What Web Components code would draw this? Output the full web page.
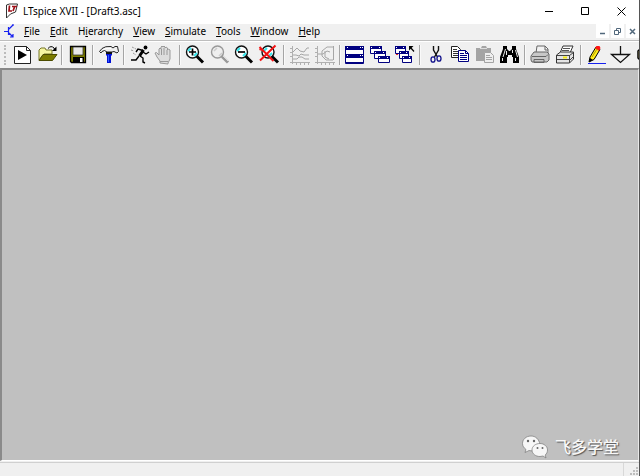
<!DOCTYPE html>
<html lang="en">
<head>
<meta charset="utf-8">
<title>LTspice XVII - [Draft3.asc]</title>
<style>
html, body { margin: 0; height: 100%; }
body { font-family: "Noto Sans", "Noto Sans CJK SC", sans-serif; font-size: 10px; color: #000; overflow: hidden; }
</style>
</head>
<body>
<app-window></app-window>
<script>
const ICONS = {
play: '<path d="M4.500 3.500h12l4 4v13h-16z" fill="#fff" stroke="#222"/><path d="M16.500 3.500v4h4" fill="none" stroke="#222"/><path d="M8 7v10l9-5z"/>',
open: '<path d="M4 17V7l2-2h4l1 2h6v4H9z" fill="#f6f6a0" stroke="#77772a"/><path d="M4 17.500l4-6h14l-4.500 6z" fill="#7b7b00" stroke="#4c4c00"/><path d="M13 5.500q3-3.500 6-.5l1 2" fill="none" stroke="#000"/><path d="M21.500 3.500v4.500h-4.500z"/>',
save: '<path d="M4.500 3.500h15v16h-14l-1-1z" fill="#7b7b00" stroke="#000" stroke-width="1.300"/><path d="M7 4h10v8H7z" fill="#e8e8e8" stroke="#222" stroke-width=".7"/><path d="M7 14h11v5H7z"/><path d="M14 15h2.500v4H14z" fill="#fff"/>',
hammer: '<path d="M2.500 8.500L5 5.500Q8 3 14 3.500l2 1.500 2-1.500h2.500l1 5-1.500 1.500-3-1.500-2 .5H10L7.500 7.500 5 8.500 4 10z" fill="#eee" stroke="#222"/><path d="M6 6.500q4-2 8-1" stroke="#fff" fill="none"/><path d="M9 9h6v3l-1 1v7h-4v-7l-1-1z" fill="#0010d8"/><path d="M9 9h6v2H9z" fill="#111"/><path d="M11.500 12v7" stroke="#315cff"/>',
run: '<circle cx="17.500" cy="4.500" r="1.900"/><path d="M15.500 7l-4 6" stroke="#000" stroke-width="3"/><path d="M15 7.500L10 6l-2 3M15 9l3 2 3-2M12 13l3 2v4l2 1M11 13l-3 4H3" fill="none" stroke="#000" stroke-width="1.400"/><path d="M4 4l4 2M3 7l3 1M5 10l3 2" stroke="#999" stroke-dasharray="2 1"/>',
hand: '<path d="M8 20v-2l-3-4-2-4 1.500-.5L7 12V6l1-1 1 1V4l1-1 1 1 1-1 1 1v1l1-1 1.500 1v2l1-1 1.500 1v9l-2 4v1z" fill="#ddd" stroke="#999"/><path d="M9.500 6v6M12 5v7M15 7v5M8 18.500h8" stroke="#999" fill="none"/>',
zoomin: '<circle cx="9.500" cy="9" r="6" fill="#fff" stroke="#111" stroke-width="1.400"/><path d="M5 8l3-3M11 13l3-3" stroke="#35e7ed" stroke-width="2"/><path d="M6 9h7M9.500 5.500v7" stroke="#000" stroke-width="1.700"/><path d="M14 13.500l6 6" stroke="#000" stroke-width="3"/>',
zoomgray: '<circle cx="9.500" cy="9" r="6" fill="#eee" stroke="#999" stroke-width="1.400"/><path d="M6 8l3-3M11 13l3-3" stroke="#ccc" stroke-width="1.500"/><path d="M14 13.500l6 6" stroke="#999" stroke-width="3"/><path d="M15 13l5 5" stroke="#ddd"/>',
zoomout: '<circle cx="9.500" cy="9" r="6" fill="#fff" stroke="#111" stroke-width="1.400"/><path d="M5 8l3-3M11 13l3-3" stroke="#35e7ed" stroke-width="2"/><path d="M6 9h7" stroke="#000" stroke-width="1.700"/><path d="M14 13.500l6 6" stroke="#000" stroke-width="3"/>',
zoomfit: '<circle cx="11" cy="9" r="6" fill="#fff" stroke="#111" stroke-width="1.400"/><path d="M7 8l3-3M12 13l3-3" stroke="#35e7ed" stroke-width="2"/><path d="M15 13.500l6 6" stroke="#000" stroke-width="3"/><path d="M2.500 4l14 14M18.500 2.500L3 17.500M2.500 6l3 1" stroke="#f11313" stroke-width="2"/>',
plot: '<path d="M4.500 3v18M2 19.500h20M2 5.500h2M2 9.500h2M2 13.500h2M8.500 20v2M12.500 20v2M16.500 20v2M20.500 20v2" stroke="#b0b0b0"/><path d="M5 9l4-4 3 3 4 1 3-4h2M5 12h3l3 1 2-2 3 1h5M5 16h4l2-2h3l3 2h4" fill="none" stroke="#a6a6a6"/>',
plane: '<path d="M4.500 3v18M2 19.500h20M2 5.500h2M2 9.500h2M2 13.500h2M8.500 20v2M12.500 20v2M16.500 20v2M20.500 20v2" stroke="#b0b0b0"/><path d="M20.500 3v14M20 4h-6l-5 4v5l4 4h7M5 11h5l4-3 3 1M12 8v6l4 2" fill="none" stroke="#a6a6a6"/>',
tile: '<path d="M2.500 3.500h18v17h-18z" fill="#fff" stroke="#000080"/><path d="M2 3h19v4H2zM2 11h19v4H2z" fill="#000080"/><path d="M2 19.500h19" stroke="#000080"/><path d="M4 4.500h1M17 4.500h1M19 4.500h1M4 12.500h1M17 12.500h1M19 12.500h1" stroke="#fff"/>',
cascade: '<g fill="#fff" stroke="#000080"><path d="M2.500 3.500h11v7h-11z"/><path d="M6.500 8.500h11v7h-11z"/><path d="M10.500 13.500h11v6h-11z"/></g><path d="M2 3h12v3H2zM6 8h12v3H6zM10 13h12v3H10z" fill="#000080"/><path d="M3 4.500h1M11 4.500h1M7 9.500h1M15 9.500h1M11 14.500h1M19 14.500h1" stroke="#fff"/>',
cascadeup: '<g fill="#fff" stroke="#000080"><path d="M2.500 3.500h10v7h-10z"/><path d="M6.500 8.500h9v7h-9z"/><path d="M9.500 13.500h9v6h-9z"/></g><path d="M2 3h11v3H2zM6 8h10v3H6zM9 13h10v3H9z" fill="#000080"/><path d="M3 4.500h1M10 4.500h1M7 9.500h1M13 9.500h1M10 14.500h1M16 14.500h1" stroke="#fff"/><path d="M3 11h2v1H3z" fill="#e22"/><path d="M16 3h4.500L16 7.500z"/><path d="M17 4l4 4.500" stroke="#000" stroke-width="1.200"/>',
cut: '<path d="M9.500 3v4l4 7M14.500 3v4l-4 7" fill="none" stroke="#111" stroke-width="1.400"/><g fill="none" stroke="#10108a" stroke-width="1.300"><ellipse cx="9" cy="16.500" rx="2" ry="2.700"/><ellipse cx="15" cy="15.500" rx="2" ry="2.700"/></g>',
copy: '<path d="M3.500 3.500h6l3 3v8h-9z" fill="#fff" stroke="#222"/><path d="M5 6.500h4M5 8.500h5M5 10.500h5M5 12.500h5" stroke="#333"/><path d="M10.500 7.500h7l3 3v8h-10z" fill="#fff" stroke="#000080"/><path d="M17.500 7.500v3h3M12 10.500h4M12 12.500h7M12 14.500h7M12 16.500h7" fill="none" stroke="#000080"/>',
paste: '<path d="M3 5h5l1-2h4l1 2h4v13H3z" fill="#a4a4a4"/><path d="M7 5.500h7" stroke="#ddd"/><path d="M11.500 9.500h6l3 3v7h-9z" fill="#eee" stroke="#a4a4a4"/><path d="M13 12.500h4M13 14.500h6M13 16.500h6" stroke="#a4a4a4"/>',
find: '<path d="M5 3h4v3l2 2h1l2-2V3h4v3l3 8v6h-6v-6h-1v-2h-4v2H9v6H2v-6l3-8z"/><path d="M7.500 6L5 14M14.500 7v3M17.500 7l2 7M4.500 15v3M17.500 15v3M8.500 8v4" stroke="#e8e8e8"/>',
print: '<path d="M8 10l1-7h8l3 3v6z" fill="#f2f2f2" stroke="#666"/><path d="M17 3v4h3" fill="none" stroke="#666"/><path d="M3 13l3-4h13l2 2v6l-2 2H4l-1-2z" fill="#c8c8c8" stroke="#666"/><path d="M4 13.500h14l2-2M6 16.500h10v3H6z" fill="none" stroke="#666"/>',
printer: '<path d="M7 10l3-7h10l-3 7z" fill="#fff" stroke="#333"/><path d="M10 5.500h7M9 7.500h7" stroke="#555"/><path d="M3.500 12l4-3h13v7l-4 4h-13z" fill="#e4e4e4" stroke="#333"/><path d="M3.500 12.500h13l4-3M16.500 12v8M4 16.500h12M17 17l4-4" fill="none" stroke="#444"/><path d="M10 14.500h4" stroke="#f4ea10" stroke-width="2"/>',
pencil: '<path d="M4 20.500h18" stroke="#1720ee"/><path d="M5 19l1-5 6-10 4 2.500-6 10z" fill="#ffec19" stroke="#000"/><path d="M6 15l3 2-4 2z"/><path d="M11 5l1.500-2h3l1 2-1.500 3z" fill="#ff1515"/><path d="M8 14l5-8" stroke="#b3a000"/>',
ground: '<path d="M11.500 3v9M2.500 11.500h18l-9 8z" fill="none" stroke="#111" stroke-width="1.300"/>',
label: '<path d="M10 6.500H6.500L5 8v7l1.500 1.500H10" fill="#fff3a0" stroke="#000" stroke-width="1.500"/>'
};

function define(name, css, html, setup) {
  const t = document.createElement('template');
  t.innerHTML = '<style>' + css + '</style>' + html;
  customElements.define(name, class extends HTMLElement {
    constructor() {
      super();
      this.attachShadow({ mode: 'open' }).append(t.content.cloneNode(true));
    }
    connectedCallback() { if (setup) setup(this, this.shadowRoot); }
  });
}
const RESET = 'button{font:inherit;color:inherit;border:0;background:none;padding:0;margin:0}';

define('window-button', ':host{display:block}' + RESET + `
button{display:grid;place-items:center;width:100%;height:100%}`, '<button><slot></slot></button>',
  (el, r) => r.querySelector('button').setAttribute('aria-label', el.getAttribute('label')));

define('title-bar', `
:host{display:flex;align-items:flex-start;height:24px;background:#fff;padding-left:5px}
svg{display:block}
.logo{margin-top:3px}
h1{font:inherit;line-height:22px;margin:0 auto 0 4px;white-space:nowrap}
window-button{width:36px;height:22px}`, `
<svg class="logo" width="14" height="16" viewBox="0 0 14 16"><path d="M1.500 15V2l3-1h8l-2 8-5 2z" fill="#fff" stroke="#333"/><path d="M4.500 2.500L4 8h3M7 3.500h5M9.500 4L8 8" fill="none" stroke="#a01018" stroke-width="1.700"/></svg>
<h1>LTspice XVII - [Draft3.asc]</h1>
<window-button label="Minimize"><svg width="9" height="9"><path d="M0 4.500h8" stroke="#000"/></svg></window-button>
<window-button label="Maximize"><svg width="9" height="9"><path d="M.5.5h7v7h-7z" fill="none" stroke="#000"/></svg></window-button>
<window-button label="Close"><svg width="9" height="9"><path d="M.5.5l8 8M8.500.5l-8 8" stroke="#000"/></svg></window-button>`);

define('menu-item', ':host{display:block}' + RESET + `
button{white-space:nowrap;line-height:14px;display:block} u{text-underline-offset:1px;text-decoration-thickness:1px}`,
  '<button><slot></slot></button>');

define('menu-bar', `
:host{display:flex;align-items:flex-start;height:16px;background:#f0f0f0;padding-left:4px}
nav{display:flex;gap:10px;margin:0 auto 0 8px}
svg{display:block}
window-button{width:13px;height:14px;background:#fff;margin-left:2px}`, `
<svg width="12" height="14" viewBox="0 0 12 14"><path d="M0 7.500h4M4.500 3v8M5 5l4-4M5 9l4 4M9 0v2M9 10v3H6" fill="none" stroke="#1721f0" stroke-width="1.200"/></svg>
<nav aria-label="Menu">
<menu-item><u>F</u>ile</menu-item><menu-item><u>E</u>dit</menu-item><menu-item>H<u>i</u>erarchy</menu-item><menu-item><u>V</u>iew</menu-item><menu-item><u>S</u>imulate</menu-item><menu-item><u>T</u>ools</menu-item><menu-item><u>W</u>indow</menu-item><menu-item><u>H</u>elp</menu-item>
</nav>
<window-button label="Minimize document"><svg width="7" height="7"><path d="M1 5.500h5" stroke="#52687c" stroke-width="1.500"/></svg></window-button>
<window-button label="Restore document"><svg width="7" height="7"><path d="M2.500 2V.500h4v4H5M.5 2.500h4v4h-4z" fill="none" stroke="#52687c"/></svg></window-button>
<window-button label="Close document"><svg width="7" height="7"><path d="M1 1l5 5M6 1L1 6" stroke="#52687c" stroke-width="1.500"/></svg></window-button>`);

define('tool-button', ':host{display:block;flex:4 1 0;min-width:0}' + RESET + `
button{display:flex;justify-content:center;width:100%}
svg{display:block;flex:none}
:host([part-shown]){flex:0 0 6px;overflow:hidden}
:host([part-shown]) button{justify-content:flex-start}`,
  '<button><svg width="24" height="24" viewBox="0 0 24 24"></svg></button>', (el, r) => {
    r.querySelector('svg').innerHTML = ICONS[el.getAttribute('icon')];
    const b = r.querySelector('button');
    b.setAttribute('aria-label', el.getAttribute('label'));
    b.disabled = el.hasAttribute('disabled');
  });

define('tool-separator', `
:host{display:flex;justify-content:center;flex:1 1 0}
i{width:1px;height:20px;background:#a5a5a5;border-right:1px solid #fafafa}`, '<i></i>');

define('tool-bar', `
:host{display:flex;align-items:center;height:26px;background:#f0f0f0;border-top:1px solid #bdbdbd;box-shadow:inset 0 1px #fff;padding:1px 0 0 4px}
.grip{width:0;height:20px;border-left:2px dotted #bbb;margin-right:4px}`, '<span class="grip"></span>' +
[['play', 'New schematic'], ['open', 'Open'], 0, ['save', 'Save'], 0, ['hammer', 'Control panel'], 0, ['run', 'Run'], ['hand', 'Halt', 1], 0,
 ['zoomin', 'Zoom in'], ['zoomgray', 'Pan', 1], ['zoomout', 'Zoom out'], ['zoomfit', 'Zoom full extents'], 0, ['plot', 'Autorange', 1], ['plane', 'Plot plane', 1], 0,
 ['tile', 'Tile windows'], ['cascade', 'Cascade windows'], ['cascadeup', 'Close all'], 0, ['cut', 'Cut'], ['copy', 'Copy'], ['paste', 'Paste', 1], ['find', 'Find'], 0,
 ['print', 'Print setup'], ['printer', 'Print'], 0, ['pencil', 'Wire'], ['ground', 'Ground']]
  .map(b => b ? `<tool-button icon="${b[0]}" label="${b[1]}"${b[2] ? ' disabled' : ''}></tool-button>` : '<tool-separator></tool-separator>').join('') +
'<tool-button icon="label" label="Label net" part-shown></tool-button>');

define('channel-mark', `
:host{display:flex;align-items:center;gap:7px;color:#f8f8f8;font-size:16px;font-weight:500;line-height:24px;text-shadow:1px 1px 1px #555}
svg{display:block}`, `
<svg width="26" height="24" viewBox="0 0 26 24"><g fill="#f7f7f7" stroke="#777" stroke-width=".7"><path d="M9 1C4 1 .5 4.500.5 8.500c0 2.500 1.500 4.500 3.500 6L3 17.500l4-2q2 .6 5 .1l6-6C17 4 13.500 1 9 1z"/><path d="M18 8.500c-4.500 0-8 2.800-8 6.500s3.500 6.500 8 6.500l3-.5 3 2-.8-3c1.500-1.300 2.300-3 2.300-5 0-3.700-3.500-6.500-7.500-6.500z"/></g><g fill="#666"><circle cx="6" cy="6" r="1.200"/><circle cx="12" cy="6" r="1.200"/><circle cx="15.500" cy="13" r="1"/><circle cx="20.500" cy="13" r="1"/></g></svg>
<span>飞多学堂</span>`);

define('work-area', `
:host{display:flex;flex:1;align-items:flex-end;justify-content:flex-end;background:#c0c0c0;border-top:2px solid #868686;border-left:2px solid #8a8a8a;border-bottom:1px solid #fff;border-right:1px solid #e8e8e8;padding:0 19px 1px 0}`,
  '<channel-mark></channel-mark>');

define('status-bar', `
:host{display:flex;justify-content:flex-end;height:13px;background:#f0f0f0;border-top:1px solid #d0d0d0;margin-top:1px}
svg{display:block;border-left:1px solid #d8d8d8}`, `
<svg width="15" height="13"><path d="M12 4h2v2h-2zM9 7h2v2H9zM12 7h2v2h-2zM6 10h2v2H6zM9 10h2v2H9zM12 10h2v2h-2z" fill="#bdbdbd"/></svg>`);

define('app-window', `
:host{display:flex;flex-direction:column;height:100vh;box-sizing:border-box;background:#f0f0f0;border-right:1px solid #555}`, `
<title-bar></title-bar><menu-bar></menu-bar><tool-bar></tool-bar><work-area></work-area><status-bar></status-bar>`);
</script>
</body>
</html>
